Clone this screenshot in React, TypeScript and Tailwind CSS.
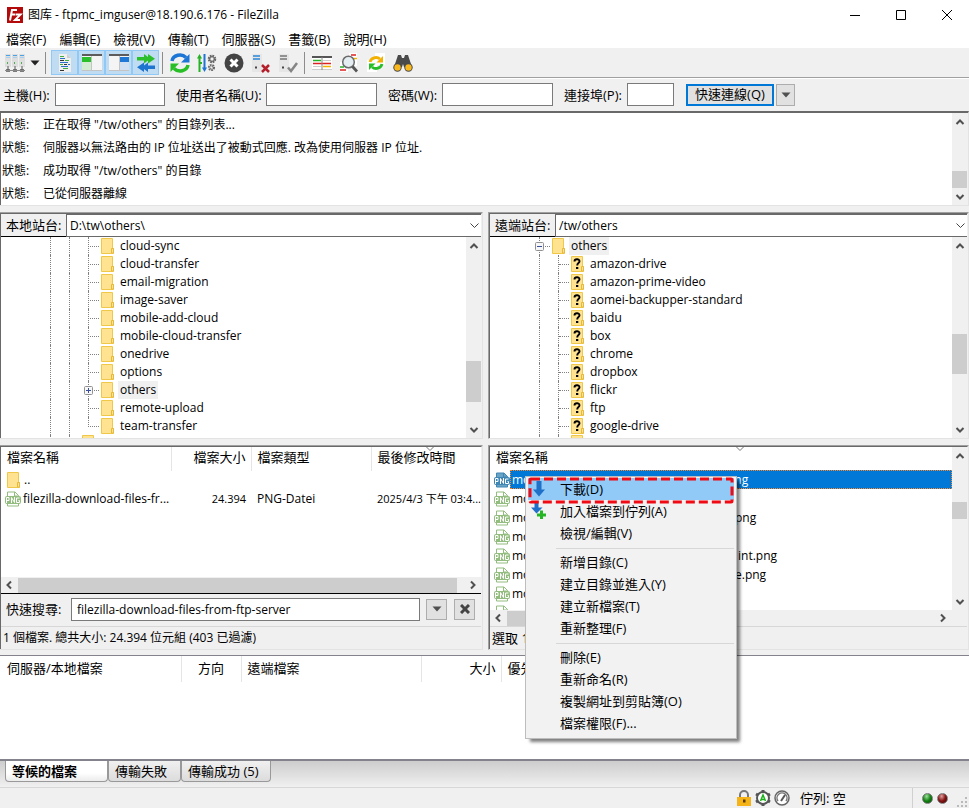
import type { ReactNode } from 'react';

const Chevron = ({ dir }: { dir: 'up' | 'down' | 'left' | 'right' }) => {
  const d = {
    up: 'M1.500 7L5 3.500 8.500 7',
    down: 'M1.500 3L5 6.500 8.500 3',
    left: 'M7 1.500L3.500 5 7 8.500',
    right: 'M3 1.500L6.500 5 3 8.500',
  }[dir];
  return (
    <svg width="10" height="10" viewBox="0 0 10 10" fill="none" stroke="#505050" strokeWidth="2">
      <path d={d} />
    </svg>
  );
};

const DownTriangle = ({ color = '#505050' }: { color?: string }) => (
  <svg width="10" height="6" viewBox="0 0 10 6" fill={color}>
    <path d="M0.500 0.500h9L5 5.500z" />
  </svg>
);

// Vertical scrollbar, the thumb is placed by the flex weights around it
const VScroll = ({ before, thumb, after }: { before: number; thumb: number; after: number }) => (
  <div className="flex w-[15px] shrink-0 flex-col items-center bg-[#f0f0f0]">
    <div className="flex h-[17px] shrink-0 items-center"><Chevron dir="up" /></div>
    <div style={{ flexGrow: before }} />
    <div className="w-full bg-[#cdcdcd]" style={{ flexGrow: thumb }} />
    <div style={{ flexGrow: after }} />
    <div className="flex h-[17px] shrink-0 items-center"><Chevron dir="down" /></div>
  </div>
);

const Folder = ({ unknown = false }: { unknown?: boolean }) => (
  <svg className="shrink-0" width="13" height="16" viewBox="0 0 13 16">
    <path d="M0.500 0.500h11v10h1v5h-12z" fill="#ffe391" stroke="#efc84a" />
    <path d="M10.500 15v-4.500h2V15z" fill="#ffe391" stroke="#e5b93c" />
    {unknown && (
      <g>
        <path d="M3.500 5.500c0-3 5-3 5-0.300 0 2-2.300 1.700-2.300 4.300" fill="none" stroke="#000" strokeWidth="1.900" />
        <path d="M5 11h2.300v2H5z" />
      </g>
    )}
  </svg>
);

const PngIcon = ({ selected = false }: { selected?: boolean }) => {
  const c = selected ? '#3f86b4' : '#93bd7e';
  return (
    <svg className="shrink-0" width="16" height="16" viewBox="0 0 16 16">
      <path d="M2.500 15V1h7.500l3.500 3.500V15z" fill={selected ? '#6ba3c4' : '#fff'} stroke={c} />
      <path d="M9.500 1v4h4" fill="none" stroke={c} />
      <rect y="5" width="16" height="8" rx="2" fill={c} />
      <path d="M1.500 12V6.500h2.500v3H1.500M6.500 12V6.500l3 5V6M14.500 7h-3v4.500h3V9.500h-1" fill="none" stroke="#fff" />
    </svg>
  );
};

const Expander = ({ open }: { open: boolean }) => (
  <svg width="9" height="9" viewBox="0 0 9 9">
    <rect x="0.500" y="0.500" width="8" height="8" rx="1" fill="#f7f7f7" stroke="#919191" />
    <path d={open ? 'M2 4.500h5' : 'M2 4.500h5M4.500 2v5'} stroke="#3a4f9a" />
  </svg>
);

const Guide = ({ className }: { className: string }) => (
  <span className={`shrink-0 self-stretch border-dotted border-[#808080] ${className}`} />
);

const localDirs = [
  'cloud-sync', 'cloud-transfer', 'email-migration', 'image-saver', 'mobile-add-cloud',
  'mobile-cloud-transfer', 'onedrive', 'options', 'others', 'remote-upload', 'team-transfer',
];

const remoteDirs = [
  'amazon-drive', 'amazon-prime-video', 'aomei-backupper-standard', 'baidu', 'box',
  'chrome', 'dropbox', 'flickr', 'ftp', 'google-drive',
];

const log = [
  '正在取得 "/tw/others" 的目錄列表...',
  '伺服器以無法路由的 IP 位址送出了被動式回應. 改為使用伺服器 IP 位址.',
  '成功取得 "/tw/others" 的目錄',
  '已從伺服器離線',
];

const remoteFiles = [
  { start: 'mo', end: 'png', pad: 'pl-[197px]' },
  { start: 'mo', end: '', pad: '' },
  { start: 'mo', end: 'png', pad: 'pl-[205px]' },
  { start: 'mo', end: '', pad: '' },
  { start: 'mo', end: 'int.png', pad: 'pl-[208px]' },
  { start: 'mo', end: 'e.png', pad: 'pl-[205px]' },
  { start: 'mo', end: '', pad: '' },
  { start: 'mo', end: '', pad: '' },
];

const ToolButton = ({ label, active = false, children }: { label: string; active?: boolean; children: ReactNode }) => (
  <button
    aria-label={label}
    className={`flex h-[25px] w-[27px] items-center justify-center ${active ? 'border border-[#90c8f6] bg-[#c0dcf3]' : ''}`}
  >
    <svg width="20" height="20" viewBox="0 0 20 20" fill="none">{children}</svg>
  </button>
);

const ToolSep = () => <div className="mx-[3px] h-[22px] w-px bg-[#8c8c8c]" />;

const Toolbar = () => (
  <div className="flex h-[30px] items-center border-b border-[#a0a0a0] bg-[#f0f0f0] pl-px">
    <ToolButton label="站台管理員">
      {[0, 7, 14].map((x) => (
        <g key={x}>
          <path d={`M${x} 1h6v13h-6z`} fill="#dedede" />
          <path d={`M${x + 1} 2.500h4`} stroke="#4aa3e6" />
          <path d={`M${x + 1} 4.500h4`} stroke="#a9cfee" />
          <path d={`M${x + 2.5} 9v2`} stroke="#4fae4f" />
          <path d={`M${x + 3} 13v4`} stroke="#888" strokeWidth="1.500" />
          <path d={`M${x + 1} 17.500h4`} stroke="#555" strokeWidth="2.500" />
        </g>
      ))}
      <path d="M0 17.500h20" stroke="#888" />
    </ToolButton>
    <button aria-label="站台清單" className="flex h-[25px] w-[14px] items-center justify-center"><DownTriangle color="#222" /></button>
    <ToolSep />
    <div className="w-[2px]" />
    <ToolButton label="訊息記錄" active>
      <path d="M4 1h8l4 4v14H4z" fill="#efefef" />
      <path d="M12 1v4h4" fill="#cfcfcf" />
      <path d="M5 3.500h4M10 7.500h4M5 11.500h3M8 15.500h5" stroke="#3fae3f" />
      <path d="M5 7.500h4M9 11.500h3M5 17.500h4" stroke="#333" />
      <path d="M5 5.500h5M5 9.500h8M6 13.500h7M13 11.500h2" stroke="#2a72c8" />
    </ToolButton>
    <ToolButton label="本機目錄樹" active>
      <path d="M0 1h20v16H0z" fill="#f4f4f4" />
      <path d="M0 8h9v9H0z" fill="#d4ecd4" />
      <path d="M0 2h20" stroke="#5c5c5c" strokeWidth="2" />
      <path d="M0 4h9v5H0z" fill="#2bc02b" />
      <path d="M9.500 3v14M0 17.500h20" stroke="#c4c4c4" />
    </ToolButton>
    <ToolButton label="遠端目錄樹" active>
      <path d="M0 1h20v16H0z" fill="#f4f4f4" />
      <path d="M11 8h9v9h-9z" fill="#d0e0f2" />
      <path d="M0 2h20" stroke="#5c5c5c" strokeWidth="2" />
      <path d="M11 4h9v5h-9z" fill="#1f78d6" />
      <path d="M10.500 3v14M0 17.500h20" stroke="#c4c4c4" />
    </ToolButton>
    <ToolButton label="傳輸佇列" active>
      <path d="M1 4h7V1l4 3V1l7 4.700-7 4.700V7.500L8 10.400V7.500H1z" fill="#2cbf2c" />
      <path d="M19 12.500h-7v-3l-4 3v-3L1 14.200l7 4.700V16l4 2.900V16h7z" fill="#1d75cf" />
    </ToolButton>
    <ToolSep />
    <ToolButton label="重新整理">
      <path d="M2 8a8 7 0 0 1 14-3.500" stroke="#1d75d5" strokeWidth="3.500" />
      <path d="M19.500 1v8.500H11z" fill="#1d75d5" />
      <path d="M18 12a8 7 0 0 1-14 3.500" stroke="#27be27" strokeWidth="3.500" />
      <path d="M0.500 19v-8.500H9z" fill="#27be27" />
    </ToolButton>
    <ToolButton label="處理佇列">
      <path d="M2.500 4v15" stroke="#27b127" strokeWidth="2" />
      <path d="M0 5.500L2.500 1 5 5.500z" fill="#27b127" />
      <path d="M7.500 1v14" stroke="#1d75d5" strokeWidth="2" />
      <path d="M5 14.500L7.500 19l2.500-4.500z" fill="#1d75d5" />
      <path d="M2 10h3" stroke="#27b127" strokeWidth="2" />
      <circle cx="15" cy="6" r="3" stroke="#666" strokeWidth="2.500" strokeDasharray="1.600 0.750" />
      <circle cx="15" cy="6" r="2.400" stroke="#666" />
      <circle cx="14.500" cy="14.500" r="2.300" stroke="#666" strokeWidth="2.500" strokeDasharray="1.400 0.700" />
    </ToolButton>
    <ToolButton label="取消">
      <circle cx="10" cy="10" r="9.500" fill="#444" />
      <path d="M6.500 6.500l7 7M13.500 6.500l-7 7" stroke="#fff" strokeWidth="3" />
    </ToolButton>
    <ToolButton label="中斷連線">
      <path d="M1 1h10v18H1z" fill="#e6e6e6" />
      <path d="M2 3h7M2 6h7" stroke="#2a86da" strokeWidth="1.500" />
      <path d="M4 14.500h2" stroke="#444" strokeWidth="2" />
      <path d="M11 12l7 7M18 12l-7 7" stroke="#b51f2b" strokeWidth="2.500" />
    </ToolButton>
    <ToolButton label="重新連線">
      <path d="M1 1h10v18H1z" fill="#e6e6e6" />
      <path d="M2 3h7M2 6h7" stroke="#777" strokeWidth="1.500" />
      <path d="M4 14.500h2" stroke="#444" strokeWidth="2" />
      <path d="M10 14.500l3 3.500 6-8" stroke="#858585" strokeWidth="2.500" />
    </ToolButton>
    <ToolSep />
    <ToolButton label="目錄比較">
      <path d="M0 3h20v13H0z" fill="#fff" />
      <path d="M0 4h20" stroke="#555" strokeWidth="2" />
      <path d="M1 7.500h8" stroke="#27b127" strokeWidth="1.500" />
      <path d="M1 10.500h18" stroke="#d22" strokeWidth="1.500" />
      <path d="M11 13.500h8" stroke="#f2b400" strokeWidth="1.500" />
      <path d="M11 7.500h8M1 13.500h8M0 16.500h20" stroke="#ccc" />
      <path d="M10 4v13" stroke="#888" />
    </ToolButton>
    <ToolButton label="篩選">
      <path d="M10 0h8v13h-8zM1 9h8v10H1z" fill="#fff" />
      <path d="M12 2h5" stroke="#d22" strokeWidth="1.500" />
      <path d="M15 5.500h3" stroke="#f2b400" strokeWidth="1.500" />
      <path d="M1 14h4" stroke="#27b127" strokeWidth="1.500" />
      <path d="M1 17h6" stroke="#d22" strokeWidth="1.500" />
      <circle cx="9.500" cy="9" r="5.800" fill="#e4edf2" stroke="#6b6b6b" strokeWidth="1.500" />
      <path d="M13.500 13.500l4.500 5" stroke="#555" strokeWidth="2.800" />
    </ToolButton>
    <ToolButton label="同步瀏覽">
      <path d="M9 0h10v12H9zM1 7h10v12H1z" fill="#fff" />
      <path d="M4 9a6 5.500 0 0 1 10-3" stroke="#f2b000" strokeWidth="2.800" />
      <path d="M17 3v6.500h-6.500z" fill="#f2b000" />
      <path d="M16 11a6 5.500 0 0 1-10 3" stroke="#27be27" strokeWidth="2.800" />
      <path d="M3 17v-6.500h6.500z" fill="#27be27" />
    </ToolButton>
    <ToolButton label="搜尋">
      <path d="M5 2h3l1 3h2l1-3h3l4 12h-8l-1-3-1 3H1z" fill="#4a4a4a" />
      <circle cx="4.500" cy="14.500" r="4.200" fill="#4a4a4a" />
      <circle cx="15.500" cy="14.500" r="4.200" fill="#4a4a4a" />
      <circle cx="4.500" cy="14.500" r="3.200" fill="#f9b81c" />
      <circle cx="15.500" cy="14.500" r="3.200" fill="#f9b81c" />
    </ToolButton>
  </div>
);

const QuickField = ({ id, label, labelWidth, inputWidth, type = 'text' }: {
  id: string; label: string; labelWidth: string; inputWidth: string; type?: string;
}) => (
  <div className="flex items-center">
    <label htmlFor={id} className={`text-[13px] ${labelWidth}`}>{label}</label>
    <input id={id} type={type} className={`h-[23px] border border-[#7a7a7a] bg-white px-1 ${inputWidth}`} />
  </div>
);

const QuickConnect = () => (
  <div className="flex h-[32px] items-center gap-[11px] border-t border-white bg-[#f0f0f0] pl-[3px]">
    <QuickField id="host" label="主機(H):" labelWidth="w-[52px]" inputWidth="w-[110px]" />
    <QuickField id="user" label="使用者名稱(U):" labelWidth="w-[90px]" inputWidth="w-[111px]" />
    <QuickField id="pass" label="密碼(W):" labelWidth="w-[54px]" inputWidth="w-[111px]" type="password" />
    <QuickField id="port" label="連接埠(P):" labelWidth="w-[63px]" inputWidth="w-[47px]" />
    <div className="flex items-center gap-[2px] pl-px">
      <button className="h-[22px] w-[88px] border-2 border-[#0078d7] bg-[#e1e1e1] text-[13px] leading-none">快速連線(Q)</button>
      <button aria-label="最近的伺服器" className="flex h-[22px] w-[19px] items-center justify-center border border-[#adadad] bg-[#e1e1e1]"><DownTriangle /></button>
    </div>
  </div>
);

const PathBar = ({ id, label, value }: { id: string; label: string; value: string }) => (
  <div className="flex h-[23px]">
    <label htmlFor={id} className="flex w-[65px] shrink-0 items-center border-b border-black bg-[#f0f0f0] pb-px pl-[5px] text-[13px]">{label}</label>
    <div className="flex min-w-0 flex-1 items-center border-t border-b border-l border-[#696969] bg-white pr-[2px]">
      <input id={id} defaultValue={value} className="min-w-0 flex-1 pl-[3px]" />
      <button aria-label={`${label} 清單`}>
        <svg width="9" height="6" viewBox="0 0 9 6" fill="none" stroke="#444"><path d="M0.500 0.500l4 4 4-4" /></svg>
      </button>
    </div>
  </div>
);

const Pane = ({ children, edge = '' }: { children: ReactNode; edge?: string }) => (
  <section className={`flex min-w-0 flex-col border-t border-r border-b border-t-[#a0a0a0] border-r-[#e3e3e3] border-b-[#e3e3e3] ${edge}`}>
    <div className="flex min-w-0 flex-1 flex-col border-t border-r border-l border-t-[#696969] border-r-[#f0f0f0] border-l-[#696969] bg-white">{children}</div>
  </section>
);

const remoteEdge = 'border-l border-l-[#a0a0a0]';

const LocalTree = () => (
  <div className="flex h-[201px]">
    <ul className="min-w-0 flex-1 overflow-hidden">
      {localDirs.map((name, i) => (
        <li key={name} className="flex h-[18px] items-center">
          <Guide className="ml-[49px] w-[19px] border-l" />
          <Guide className="w-[15px] border-l" />
          <span className="relative flex w-[17px] shrink-0 items-center self-stretch">
            <span className={`absolute top-0 left-1 border-l border-dotted border-[#808080] ${i === localDirs.length - 1 ? 'h-[10px]' : 'h-[18px]'}`} />
            <span className="mt-px ml-1 w-[11px] border-t border-dotted border-[#808080]" />
            {name === 'others' && <span className="absolute top-[5px] left-0"><Expander open={false} /></span>}
          </span>
          <Folder />
          <span className={`ml-1 px-[2px] leading-[18px] ${name === 'others' ? 'bg-[#f0f0f0]' : ''}`}>{name}</span>
        </li>
      ))}
      <li className="flex h-[18px] items-start">
        <Guide className="ml-[49px] w-[19px] border-l" />
        <Guide className="w-[13px] border-l" />
        <Folder />
      </li>
    </ul>
    <VScroll before={107} thumb={41} after={19} />
  </div>
);

const RemoteTree = () => (
  <div className="flex h-[201px]">
    <ul className="min-w-0 flex-1 overflow-hidden">
      <li className="flex h-[18px] items-center">
        <span className="relative ml-[45px] flex w-[17px] shrink-0 items-center self-stretch">
          <span className="absolute top-0 left-1 h-[18px] border-l border-dotted border-[#808080]" />
          <span className="mt-px ml-1 w-[11px] border-t border-dotted border-[#808080]" />
          <span className="absolute top-[5px] left-0"><Expander open /></span>
        </span>
        <Folder />
        <span className="ml-1 bg-[#f0f0f0] px-[2px] leading-[18px]">others</span>
      </li>
      {remoteDirs.map((name) => (
        <li key={name} className="flex h-[18px] items-center">
          <Guide className="ml-[49px] w-[19px] border-l" />
          <Guide className="w-px border-l" />
          <span className="mt-px mr-[2px] w-[10px] border-t border-dotted border-[#808080]" />
          <Folder unknown />
          <span className="ml-1 px-[2px] leading-[18px]">{name}</span>
        </li>
      ))}
      <li className="flex h-[18px] items-start">
        <Guide className="ml-[49px] w-[19px] border-l" />
        <Guide className="mr-[12px] w-px border-l" />
        <Folder />
      </li>
    </ul>
    <VScroll before={80} thumb={40} after={47} />
  </div>
);

const SortMark = () => (
  <svg width="8" height="4" viewBox="0 0 8 4" fill="none" stroke="#777"><path d="M0.500 0l3.500 3.500L7.500 0" /></svg>
);

const LocalList = () => (
  <Pane>
    <div className="h-[130px] overflow-hidden">
      <table className="w-full table-fixed whitespace-nowrap">
        <colgroup>
          <col className="w-[170px]" /><col className="w-[80px]" /><col className="w-[120px]" /><col />
        </colgroup>
        <thead>
          <tr className="h-[24px] text-left text-[13px]">
            <th className="border-r border-[#e5e5e5] pb-[4px] pl-[6px] font-normal">檔案名稱</th>
            <th className="border-r border-[#e5e5e5] pr-[5px] pb-[4px] text-right font-normal">檔案大小</th>
            <th className="border-r border-[#e5e5e5] pb-[4px] pl-[6px] font-normal">檔案類型</th>
            <th className="relative pb-[4px] pl-[6px] font-normal">
              最後修改時間
              <span className="absolute top-0 left-1/2"><SortMark /></span>
            </th>
          </tr>
        </thead>
        <tbody>
          <tr className="h-[18px]">
            <td colSpan={4} className="pl-[6px]"><div className="flex items-center gap-1"><Folder />..</div></td>
          </tr>
          <tr className="h-[19px]">
            <td className="pl-[4px]"><div className="flex items-center gap-[2px]"><PngIcon />filezilla-download-files-fr...</div></td>
            <td className="pr-[5px] text-right text-[11px]">24.394</td>
            <td className="pl-[6px]">PNG-Datei</td>
            <td className="pl-[6px] text-[11px]">2025/4/3 下午 03:4...</td>
          </tr>
        </tbody>
      </table>
    </div>
    <div className="flex h-[16px] items-center bg-[#f0f0f0] px-[3px]">
      <Chevron dir="left" />
      <div className="mr-[11px] ml-1 h-[15px] flex-1 bg-[#cdcdcd]" />
      <Chevron dir="right" />
    </div>
    <div className="flex h-[33px] items-center border-t border-black bg-[#f0f0f0] pr-[6px] pb-[2px] pl-[5px]">
      <label htmlFor="search" className="w-[65px] text-[13px]">快速搜尋:</label>
      <input id="search" defaultValue="filezilla-download-files-from-ftp-server" className="h-[23px] min-w-0 flex-1 border border-[#7a7a7a] bg-white px-[5px]" />
      <button aria-label="搜尋選項" className="ml-[6px] flex h-[21px] w-[21px] items-center justify-center border border-[#adadad] bg-[#e1e1e1]"><DownTriangle /></button>
      <button aria-label="關閉搜尋" className="ml-[7px] flex h-[21px] w-[21px] items-center justify-center border border-[#adadad] bg-[#e1e1e1]">
        <svg width="10" height="10" viewBox="0 0 10 10" stroke="#444" strokeWidth="3"><path d="M1 1l8 8M9 1L1 9" /></svg>
      </button>
    </div>
    <div className="flex h-[23px] items-center border-t border-[#d7d7d7] bg-[#f0f0f0] pl-[2px]">1 個檔案. 總共大小: 24.394 位元組 (403 已過濾)</div>
  </Pane>
);

const RemoteList = () => (
  <Pane edge={remoteEdge}>
    <div className="flex h-[163px]">
      <div className="min-w-0 flex-1 overflow-hidden">
        <table className="w-full table-fixed whitespace-nowrap">
          <thead>
            <tr className="h-[23px] text-left text-[13px]">
              <th className="relative pb-[3px] pl-[6px] font-normal">
                檔案名稱
                <span className="absolute top-0 left-[246px]"><SortMark /></span>
              </th>
            </tr>
          </thead>
          <tbody>
            {remoteFiles.map((f, i) => (
              <tr key={i} className="h-[19px]">
                <td className="pl-[4px]">
                  <div className="flex items-center">
                    <PngIcon selected={i === 0} />
                    <div className={`flex h-[19px] flex-1 items-center pl-[2px] ${i === 0 ? 'bg-[#0078d7] text-white outline-1 -outline-offset-1 outline-dotted outline-[#ff8728]' : ''}`}>
                      <span className="w-[18px] shrink-0">{f.start}</span>
                      <span className={f.pad}>{f.end}</span>
                    </div>
                  </div>
                </td>
              </tr>
            ))}
          </tbody>
        </table>
      </div>
      <VScroll before={38} thumb={17} after={73} />
    </div>
    <div className="flex h-[16px] items-center justify-between bg-[#f0f0f0] pr-[19px] pl-[3px]">
      <Chevron dir="left" />
      <div className="mr-auto ml-1 h-[15px] w-[100px] bg-[#cdcdcd]" />
      <Chevron dir="right" />
    </div>
    <div className="flex flex-1 items-center border-t border-[#d7d7d7] bg-[#f0f0f0] pl-[2px] text-[13px]">選取 1</div>
  </Pane>
);

const Queue = () => (
  <div className="min-h-[104px] flex-1 border-t border-b-2 border-[#82838b] bg-white">
    <table className="w-full table-fixed text-left text-[13px] whitespace-nowrap">
      <colgroup>
        <col className="w-[181px]" /><col className="w-[60px]" /><col className="w-[180px]" /><col className="w-[80px]" /><col />
      </colgroup>
      <thead>
        <tr className="h-[26px]">
          <th className="border-r border-[#e5e5e5] pb-[2px] pl-[7px] font-normal">伺服器/本地檔案</th>
          <th className="border-r border-[#e5e5e5] pb-[2px] text-center font-normal">方向</th>
          <th className="border-r border-[#e5e5e5] pb-[2px] pl-[6px] font-normal">遠端檔案</th>
          <th className="border-r border-[#e5e5e5] pr-[5px] pb-[2px] text-right font-normal">大小</th>
          <th className="pb-[2px] pl-[6px] font-normal">優先權</th>
        </tr>
      </thead>
    </table>
  </div>
);

const tabClass = 'h-[21px] rounded-b border border-t-0 border-[#999] pl-[6px] text-left leading-[18px]';

const QueueTabs = () => (
  <div className="flex h-[27px] items-start border-b border-[#d7d7d7] bg-linear-to-b from-[#cdcdcd] to-[#f0f0f0] pl-[5px] text-[13px]">
    <button className={`w-[103px] bg-linear-to-b from-white from-60% to-[#ececec] font-bold ${tabClass}`}>等候的檔案</button>
    <button className={`w-[73px] bg-linear-to-b from-[#f0f0f0] to-[#dcdcdc] ${tabClass}`}>傳輸失敗</button>
    <button className={`w-[90px] bg-linear-to-b from-[#f0f0f0] to-[#dcdcdc] ${tabClass}`}>傳輸成功 (5)</button>
  </div>
);

const StatusBar = () => (
  <footer className="flex h-[20px] items-center justify-end bg-[#f0f0f0]">
    <div className="flex items-center gap-[3px]">
      <svg width="16" height="16" viewBox="0 0 16 16">
        <path d="M4 8V5a4 4 0 0 1 8 0v3" fill="none" stroke="#777" strokeWidth="2" />
        <rect x="1" y="7" width="14" height="9" fill="#f6b318" />
        <path d="M7 9.500h2.500v3H7z" fill="#5a3b00" />
      </svg>
      <svg width="16" height="16" viewBox="0 0 16 16" fill="none">
        <path d="M8 0v16M1 4l14 8M15 4L1 12" stroke="#555" strokeWidth="3" />
        <circle cx="8" cy="8" r="6" fill="#fff" stroke="#555" strokeWidth="2" />
        <path d="M5.500 11L8 5l2.500 6M6.500 9.500h3" stroke="#19b219" strokeWidth="1.500" />
      </svg>
      <svg width="16" height="16" viewBox="0 0 16 16" fill="none">
        <circle cx="8" cy="8" r="7" fill="#fff" stroke="#666" strokeWidth="1.500" />
        <path d="M4 11a5 5 0 1 1 8 0" stroke="#777" strokeWidth="1.500" />
        <path d="M7 11l4-6" stroke="#555" strokeWidth="2" />
      </svg>
    </div>
    <span className="ml-[10px] w-[112px] text-[13px]">佇列: 空</span>
    <div className="flex h-full items-center gap-1 border-l border-[#d0d0d0] pr-[8px] pl-[9px]">
      <span className="h-[11px] w-[11px] rounded-full border border-[#777] bg-radial-[at_40%_25%] from-[#9fe09f] via-[#138313] to-[#023e02]" />
      <span className="h-[11px] w-[11px] rounded-full border border-[#777] bg-radial-[at_40%_25%] from-[#e09f9f] via-[#831313] to-[#3e0202]" />
    </div>
    <svg className="self-end" width="13" height="12" viewBox="0 0 13 12" fill="#bababa">
      <path d="M9 1h2v2H9zM5 5h2v2H5zM9 5h2v2H9zM1 9h2v2H1zM5 9h2v2H5zM9 9h2v2H9z" />
    </svg>
  </footer>
);

const MenuItem = ({ label, icon, active = false }: { label: string; icon?: ReactNode; active?: boolean }) => (
  <button role="menuitem" className={`flex h-[22px] w-full items-center ${active ? 'bg-[#91c9f7]' : ''}`}>
    <span className="ml-[3px] flex w-[29px] shrink-0">{icon}</span>
    {label}
  </button>
);

const MenuSep = () => <div className="mt-[4px] mb-[2px] ml-[28px] h-px bg-[#d7d7d7]" />;

const ContextMenu = () => (
  <div role="menu" className="absolute top-[476px] left-[525px] w-[212px] border border-[#bdbdbd] bg-[#f2f2f2] px-[2px] pt-px pb-[4px] text-[13px] shadow-[4px_4px_3px_-1px_rgba(0,0,0,0.5)]">
    <MenuItem
      label="下載(D)"
      active
      icon={<svg width="16" height="16" viewBox="0 0 16 16"><path d="M5.500 0h5v8.500h3.500L8 15.500 2 8.500h3.500z" fill="#1f70c8" /></svg>}
    />
    <MenuItem
      label="加入檔案到佇列(A)"
      icon={
        <svg width="16" height="16" viewBox="0 0 16 16">
          <path d="M3.500 0h4v4.500h4L5.500 10.500 0 4.500h3.500z" fill="#1f70c8" />
          <path d="M9 7.500h3v3h3v3h-3v3H9v-3H6v-3h3z" fill="#25b525" />
        </svg>
      }
    />
    <MenuItem label="檢視/編輯(V)" />
    <MenuSep />
    <MenuItem label="新增目錄(C)" />
    <MenuItem label="建立目錄並進入(Y)" />
    <MenuItem label="建立新檔案(T)" />
    <MenuItem label="重新整理(F)" />
    <MenuSep />
    <MenuItem label="刪除(E)" />
    <MenuItem label="重新命名(R)" />
    <MenuItem label="複製網址到剪貼簿(O)" />
    <MenuItem label="檔案權限(F)..." />
    {/* highlight around the download item */}
    <svg className="absolute top-0 left-[2px]" width="206" height="27" viewBox="0 0 206 27" fill="none">
      <rect x="2" y="2" width="202" height="23" rx="1" stroke="#f00a14" strokeWidth="3" strokeDasharray="9 4" />
    </svg>
  </div>
);

const App = () => {
  return (
    <div className="relative flex min-h-screen flex-col overflow-hidden bg-[#f0f0f0] font-['Open_Sans','Noto_Sans_CJK_TC',sans-serif] text-[12px] leading-4 text-black">
      {/* Title bar */}
      <header className="flex h-[29px] items-center bg-white pr-[17px] pl-[7px]">
        <svg width="16" height="16" viewBox="0 0 16 16">
          <rect width="16" height="16" fill="#b30b0b" />
          <path d="M3 13.500L5 3h5M4 7.500h4M8.500 7.500h5L8 13h5" fill="none" stroke="#fff" strokeWidth="2" />
        </svg>
        <h1 className="ml-[5px] flex-1">图库 - ftpmc_imguser@18.190.6.176 - FileZilla</h1>
        <div className="flex gap-[36px]">
          <button aria-label="最小化"><svg width="10" height="10" viewBox="0 0 10 10" stroke="#000"><path d="M0 5.500h10" /></svg></button>
          <button aria-label="最大化"><svg width="10" height="10" viewBox="0 0 10 10" fill="none" stroke="#000"><path d="M0.500 0.500h9v9h-9z" /></svg></button>
          <button aria-label="關閉"><svg width="10" height="10" viewBox="0 0 10 10" stroke="#000"><path d="M0 0l10 10M10 0L0 10" /></svg></button>
        </div>
      </header>

      {/* Menu bar */}
      <nav className="flex h-[19px] items-center gap-[13px] bg-white pl-[6px] text-[13px]">
        <button>檔案(F)</button>
        <button>編輯(E)</button>
        <button>檢視(V)</button>
        <button>傳輸(T)</button>
        <button>伺服器(S)</button>
        <button>書籤(B)</button>
        <button>說明(H)</button>
      </nav>

      <Toolbar />
      <QuickConnect />

      {/* Message log */}
      <div className="mt-px flex border-t-2 border-r border-b border-t-[#696969] border-r-[#e3e3e3] border-b-[#e3e3e3] bg-[#f0f0f0] pr-px">
        <ul className="flex-1 border-l border-[#696969] bg-white">
          {log.map((text) => (
            <li key={text} className="flex h-[23px] items-center pl-px">
              <span className="w-[41px]">狀態:</span>
              {text}
            </li>
          ))}
        </ul>
        <VScroll before={42} thumb={17} after={0} />
      </div>

      {/* Local and remote sites */}
      <div className="mt-[6px] grid grid-cols-[483fr_481fr] gap-[5px]">
        <Pane>
          <PathBar id="local-path" label="本地站台:" value="D:\tw\others\" />
          <LocalTree />
        </Pane>
        <Pane edge={remoteEdge}>
          <PathBar id="remote-path" label="遠端站台:" value="/tw/others" />
          <RemoteTree />
        </Pane>
      </div>
      <div className="mt-[6px] mb-[5px] grid grid-cols-[483fr_481fr] gap-[5px]">
        <LocalList />
        <RemoteList />
      </div>

      <Queue />
      <QueueTabs />
      <StatusBar />
      <ContextMenu />
    </div>
  );
};

export default App;
